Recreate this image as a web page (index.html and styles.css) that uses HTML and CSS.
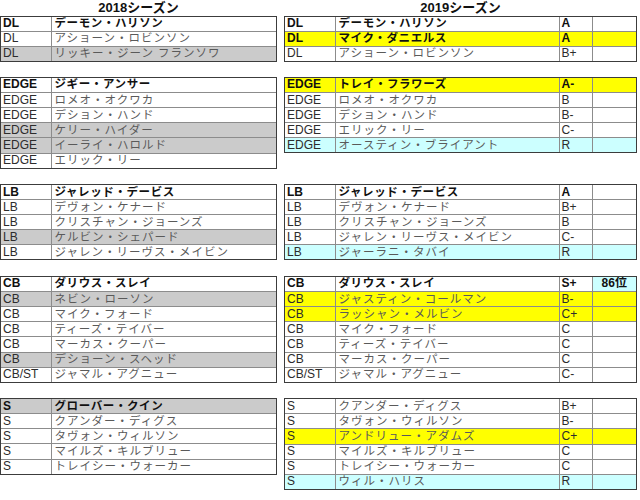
FILE: index.html
```html
<!DOCTYPE html>
<html lang="ja">
<head>
<meta charset="utf-8">
<title>2018 / 2019 シーズン</title>
<link rel="stylesheet" href="styles.css">
</head>
<body>
<div class="page">
  <section class="side left">
    <div class="title">2018シーズン</div>

    <div class="tbl n3">
      <div class="row head"><div class="c pos">DL</div><div class="c name">デーモン・ハリソン</div></div>
      <div class="row"><div class="c pos">DL</div><div class="c name">アショーン・ロビンソン</div></div>
      <div class="row gray"><div class="c pos">DL</div><div class="c name">リッキー・ジーン フランソワ</div></div>
    </div>

    <div class="tbl n6">
      <div class="row head"><div class="c pos">EDGE</div><div class="c name">ジギー・アンサー</div></div>
      <div class="row"><div class="c pos">EDGE</div><div class="c name">ロメオ・オクワカ</div></div>
      <div class="row"><div class="c pos">EDGE</div><div class="c name">デション・ハンド</div></div>
      <div class="row gray"><div class="c pos">EDGE</div><div class="c name">ケリー・ハイダー</div></div>
      <div class="row gray"><div class="c pos">EDGE</div><div class="c name">イーライ・ハロルド</div></div>
      <div class="row"><div class="c pos">EDGE</div><div class="c name">エリック・リー</div></div>
    </div>

    <div class="tbl n5">
      <div class="row head"><div class="c pos">LB</div><div class="c name">ジャレッド・デービス</div></div>
      <div class="row"><div class="c pos">LB</div><div class="c name">デヴォン・ケナード</div></div>
      <div class="row"><div class="c pos">LB</div><div class="c name">クリスチャン・ジョーンズ</div></div>
      <div class="row gray"><div class="c pos">LB</div><div class="c name">ケルビン・シェパード</div></div>
      <div class="row"><div class="c pos">LB</div><div class="c name">ジャレン・リーヴス・メイビン</div></div>
    </div>

    <div class="tbl n7">
      <div class="row head"><div class="c pos">CB</div><div class="c name">ダリウス・スレイ</div></div>
      <div class="row gray"><div class="c pos">CB</div><div class="c name">ネビン・ローソン</div></div>
      <div class="row"><div class="c pos">CB</div><div class="c name">マイク・フォード</div></div>
      <div class="row"><div class="c pos">CB</div><div class="c name">ティーズ・テイバー</div></div>
      <div class="row"><div class="c pos">CB</div><div class="c name">マーカス・クーパー</div></div>
      <div class="row gray"><div class="c pos">CB</div><div class="c name">デショーン・スヘッド</div></div>
      <div class="row"><div class="c pos">CB/ST</div><div class="c name">ジャマル・アグニュー</div></div>
    </div>

    <div class="tbl n5">
      <div class="row head gray"><div class="c pos">S</div><div class="c name">グローバー・クイン</div></div>
      <div class="row"><div class="c pos">S</div><div class="c name">クアンダー・ディグス</div></div>
      <div class="row"><div class="c pos">S</div><div class="c name">タヴォン・ウィルソン</div></div>
      <div class="row"><div class="c pos">S</div><div class="c name">マイルズ・キルブリュー</div></div>
      <div class="row"><div class="c pos">S</div><div class="c name">トレイシー・ウォーカー</div></div>
    </div>
  </section>

  <section class="side right">
    <div class="title">2019シーズン</div>

    <div class="tbl n3">
      <div class="row head"><div class="c pos">DL</div><div class="c name">デーモン・ハリソン</div><div class="c grade">A</div><div class="c extra"></div></div>
      <div class="row head yellow"><div class="c pos">DL</div><div class="c name">マイク・ダニエルス</div><div class="c grade">A</div><div class="c extra"></div></div>
      <div class="row"><div class="c pos">DL</div><div class="c name">アショーン・ロビンソン</div><div class="c grade">B+</div><div class="c extra"></div></div>
    </div>

    <div class="tbl n5">
      <div class="row head yellow"><div class="c pos">EDGE</div><div class="c name">トレイ・フラワーズ</div><div class="c grade">A-</div><div class="c extra"></div></div>
      <div class="row"><div class="c pos">EDGE</div><div class="c name">ロメオ・オクワカ</div><div class="c grade">B</div><div class="c extra"></div></div>
      <div class="row"><div class="c pos">EDGE</div><div class="c name">デション・ハンド</div><div class="c grade">B-</div><div class="c extra"></div></div>
      <div class="row"><div class="c pos">EDGE</div><div class="c name">エリック・リー</div><div class="c grade">C-</div><div class="c extra"></div></div>
      <div class="row cyan"><div class="c pos">EDGE</div><div class="c name">オースティン・ブライアント</div><div class="c grade">R</div><div class="c extra"></div></div>
    </div>

    <div class="tbl n5 gap2">
      <div class="row head"><div class="c pos">LB</div><div class="c name">ジャレッド・デービス</div><div class="c grade">A</div><div class="c extra"></div></div>
      <div class="row"><div class="c pos">LB</div><div class="c name">デヴォン・ケナード</div><div class="c grade">B+</div><div class="c extra"></div></div>
      <div class="row"><div class="c pos">LB</div><div class="c name">クリスチャン・ジョーンズ</div><div class="c grade">B</div><div class="c extra"></div></div>
      <div class="row"><div class="c pos">LB</div><div class="c name">ジャレン・リーヴス・メイビン</div><div class="c grade">C-</div><div class="c extra"></div></div>
      <div class="row cyan"><div class="c pos">LB</div><div class="c name">ジャーラニ・タバイ</div><div class="c grade">R</div><div class="c extra"></div></div>
    </div>

    <div class="tbl n7">
      <div class="row head"><div class="c pos">CB</div><div class="c name">ダリウス・スレイ</div><div class="c grade">S+</div><div class="c extra rank">86位</div></div>
      <div class="row yellow"><div class="c pos">CB</div><div class="c name">ジャスティン・コールマン</div><div class="c grade">B-</div><div class="c extra"></div></div>
      <div class="row yellow"><div class="c pos">CB</div><div class="c name">ラッシャン・メルビン</div><div class="c grade">C+</div><div class="c extra"></div></div>
      <div class="row"><div class="c pos">CB</div><div class="c name">マイク・フォード</div><div class="c grade">C</div><div class="c extra"></div></div>
      <div class="row"><div class="c pos">CB</div><div class="c name">ティーズ・テイバー</div><div class="c grade">C</div><div class="c extra"></div></div>
      <div class="row"><div class="c pos">CB</div><div class="c name">マーカス・クーパー</div><div class="c grade">C</div><div class="c extra"></div></div>
      <div class="row"><div class="c pos">CB/ST</div><div class="c name">ジャマル・アグニュー</div><div class="c grade">C-</div><div class="c extra"></div></div>
    </div>

    <div class="tbl n6">
      <div class="row"><div class="c pos">S</div><div class="c name">クアンダー・ディグス</div><div class="c grade">B+</div><div class="c extra"></div></div>
      <div class="row"><div class="c pos">S</div><div class="c name">タヴォン・ウィルソン</div><div class="c grade">B-</div><div class="c extra"></div></div>
      <div class="row yellow"><div class="c pos">S</div><div class="c name">アンドリュー・アダムズ</div><div class="c grade">C+</div><div class="c extra"></div></div>
      <div class="row"><div class="c pos">S</div><div class="c name">マイルズ・キルブリュー</div><div class="c grade">C</div><div class="c extra"></div></div>
      <div class="row"><div class="c pos">S</div><div class="c name">トレイシー・ウォーカー</div><div class="c grade">C</div><div class="c extra"></div></div>
      <div class="row cyan"><div class="c pos">S</div><div class="c name">ウィル・ハリス</div><div class="c grade">R</div><div class="c extra"></div></div>
    </div>
  </section>
</div>
</body>
</html>
```

FILE: styles.css
```css
:root {
  --p: 15.3px;
  --b: 1.5px;
  --outer: #3c3c3c;
  --inner: #8c8c8c;
}

html, body {
  margin: 0;
  padding: 0;
  background: #ffffff;
}

body {
  font-family: "Liberation Sans", "Noto Sans CJK JP", sans-serif;
  color: #333333;
  width: 640px;
  height: 500px;
  overflow: hidden;
}

.page {
  display: grid;
  grid-template-columns: 277px 353px;
  column-gap: 7px;
  align-items: start;
}

.side {
  display: flex;
  flex-direction: column;
}

.title {
  height: 15.7px;
  line-height: 16px;
  text-align: center;
  font-weight: bold;
  font-size: 13px;
  color: #111111;
}

.tbl {
  box-sizing: border-box;
  border: var(--b) solid var(--outer);
  display: flex;
  flex-direction: column;
  background: #ffffff;
}

.tbl + .tbl {
  margin-top: var(--p);
}

.tbl.gap2 {
  margin-top: calc(2 * var(--p));
}

.n3 { height: calc(3 * var(--p)); }
.n5 { height: calc(5 * var(--p)); }
.n6 { height: calc(6 * var(--p)); }
.n7 { height: calc(7 * var(--p)); }

.row {
  flex: 1 1 0;
  min-height: 0;
  display: grid;
  box-sizing: border-box;
}

.left .row {
  grid-template-columns: 49.5px 1fr;
}

.right .row {
  grid-template-columns: 49.5px 224px 33px 1fr;
}

.row + .row {
  border-top: 1px solid var(--inner);
}

.c {
  box-sizing: border-box;
  display: flex;
  align-items: center;
  overflow: hidden;
  white-space: nowrap;
  font-size: 12px;
  line-height: 13px;
}

.c + .c {
  border-left: 1px solid var(--inner);
}

.pos {
  padding-left: 2px;
  color: #2c2c2c;
}

.name {
  padding-left: 3px;
  font-size: 11.5px;
  letter-spacing: 1px;
  color: #5a5a5a;
}

.grade {
  padding-left: 2px;
  color: #2c2c2c;
}

.extra.rank {
  justify-content: center;
  background: #ccffff;
  font-weight: bold;
  color: #111111;
}

.head .c {
  font-weight: bold;
  color: #111111;
}

.head .name {
  letter-spacing: 0.6px;
}

.gray { background: #cbcbcb; }
.yellow { background: #ffff00; }
.cyan { background: #ccffff; }
```
